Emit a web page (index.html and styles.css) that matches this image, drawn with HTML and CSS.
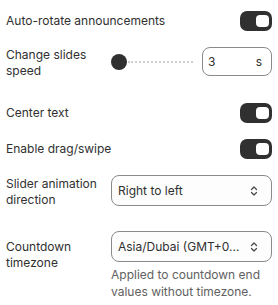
FILE: index.html
```html
<!DOCTYPE html>
<html>
<head>
<meta charset="utf-8">
<link rel="stylesheet" href="styles.css">
</head>
<body>
<div class="settings">
  <div class="row row-toggle r1">
    <span class="label">Auto-rotate announcements</span>
    <span class="toggle"><span class="knob"></span></span>
  </div>
  <div class="row row-grid r2">
    <span class="label">Change slides speed</span>
    <div class="range-wrap">
      <div class="range">
        <span class="thumb"></span>
        <span class="track"></span>
      </div>
      <div class="num">
        <span>3</span>
        <span>s</span>
      </div>
    </div>
  </div>
  <div class="row row-toggle r3">
    <span class="label">Center text</span>
    <span class="toggle"><span class="knob"></span></span>
  </div>
  <div class="row row-toggle r4">
    <span class="label">Enable drag/swipe</span>
    <span class="toggle"><span class="knob"></span></span>
  </div>
  <div class="row row-grid r5">
    <span class="label">Slider animation direction</span>
    <div class="select">
      <span class="sel-text">Right to left</span>
      <svg class="chev" width="8" height="14" viewBox="0 0 8 14"><path d="M1.5 5.5 L4 3 L6.5 5.5 M1.5 8.5 L4 11 L6.5 8.5" fill="none" stroke="#4a4a4a" stroke-width="1.3" stroke-linecap="round" stroke-linejoin="round"/></svg>
    </div>
  </div>
  <div class="row row-grid r6">
    <span class="label">Countdown timezone</span>
    <div class="ctl">
      <div class="select">
        <span class="sel-text">Asia/Dubai (GMT+0...</span>
        <svg class="chev" width="8" height="14" viewBox="0 0 8 14"><path d="M1.5 5.5 L4 3 L6.5 5.5 M1.5 8.5 L4 11 L6.5 8.5" fill="none" stroke="#4a4a4a" stroke-width="1.3" stroke-linecap="round" stroke-linejoin="round"/></svg>
      </div>
      <p class="help">Applied to countdown end values without timezone.</p>
    </div>
  </div>
</div>
</body>
</html>
```
FILE: styles.css
```css
html, body {
  margin: 0;
  padding: 0;
  background: #ffffff;
}
body {
  font-family: Inter, "Noto Sans", sans-serif;
  font-size: 12px;
  line-height: 16px;
  color: #303030;
}
.settings {
  padding: 11px 6px 0 6px;
  display: flex;
  flex-direction: column;
}
.row-toggle {
  display: flex;
  align-items: center;
  justify-content: space-between;
  height: 20px;
}
.row-grid {
  display: grid;
  grid-template-columns: 105px 1fr;
  align-items: start;
}
.r2 { margin-top: 16px; }
.r3 { margin-top: 24px; }
.r4 { margin-top: 16px; }
.r5 { margin-top: 16px; }
.r6 { margin-top: 23px; }
.label { display: block; }
.row-grid .label { padding-right: 6px; }
.r5 .label { padding-top: 1px; }
.r6 .label { padding-top: 8px; }
.toggle {
  width: 32px;
  height: 20px;
  border-radius: 7px;
  background: #303030;
  position: relative;
  display: block;
}
.knob {
  position: absolute;
  right: 3px;
  top: 4px;
  width: 13px;
  height: 12px;
  border-radius: 4px;
  background: #ffffff;
}
.range-wrap {
  display: flex;
  align-items: center;
  justify-content: space-between;
}
.range {
  display: flex;
  align-items: center;
  padding-top: 1px;
}
.thumb {
  width: 16px;
  height: 16px;
  border-radius: 50%;
  background: #303030;
}
.track {
  width: 65px;
  height: 0;
  border-top: 2px dotted #cfcfcf;
  margin-left: 1px;
}
.num {
  width: 70px;
  height: 29px;
  box-sizing: border-box;
  border: 1px solid #8a8a8a;
  border-radius: 8px;
  display: flex;
  align-items: center;
  justify-content: space-between;
  padding: 0 9px 0 5px;
}
.select {
  height: 31px;
  box-sizing: border-box;
  border: 1px solid #8a8a8a;
  border-radius: 8px;
  background: #fdfdfd;
  display: flex;
  align-items: center;
  justify-content: space-between;
  padding: 0 13px 0 6px;
}
.sel-text {
  color: #303030;
  white-space: nowrap;
}
.chev { display: block; }
.ctl { display: flex; flex-direction: column; }
.help {
  margin: 4px 0 0 0;
  color: #616161;
  font-size: 12px;
  line-height: 17px;
}
```
